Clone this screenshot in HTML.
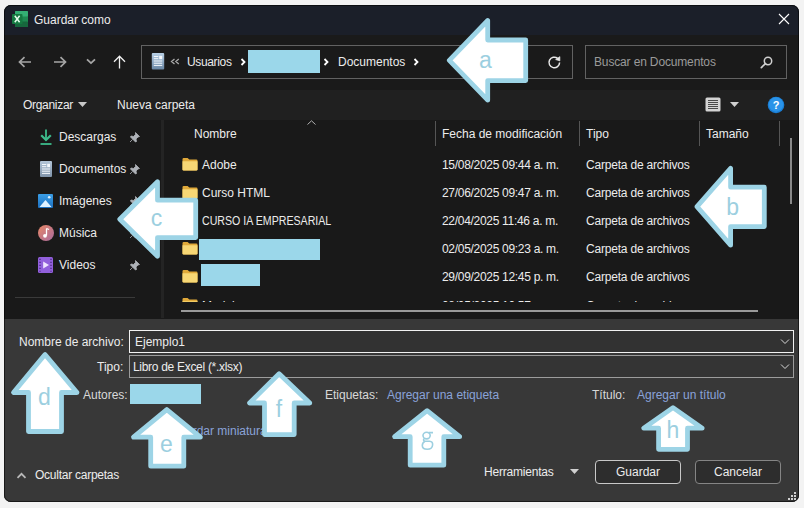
<!DOCTYPE html>
<html><head><meta charset="utf-8">
<style>
*{box-sizing:border-box;margin:0;padding:0}
html,body{width:804px;height:508px;overflow:hidden;background:#f3f3f3;font-family:"Liberation Sans",sans-serif;font-size:12px;color:#fff}
.a{position:absolute}
.t{position:absolute;white-space:nowrap;line-height:14px;height:14px;color:#ececec}
.cp{letter-spacing:-0.2px}
#dlg{position:absolute;left:4px;top:5px;width:795px;height:497px;border-radius:7px;overflow:hidden;background:#191919}
#lay{position:absolute;left:0;top:0;width:804px;height:508px}
.sep{position:absolute;width:1px;background:#3a3a3a}
.box{position:absolute;border:1px solid #7a7a7a;border-radius:2px}
.lnk{color:#8aa3d8}
.dt{letter-spacing:-0.3px}
</style></head><body>
<div id="dlg">
  <div class="a" style="left:0;top:0;width:795px;height:30px;background:#1b1f29"></div>
  <div class="a" style="left:0;top:30px;width:795px;height:55px;background:#1a1a1a"></div>
  <div class="a" style="left:0;top:85px;width:795px;height:30px;background:#202020"></div>
  <div class="a" style="left:0;top:314px;width:795px;height:183px;background:#383838"></div>
</div>
<div class="a" style="left:4px;top:5px;width:795px;height:497px;border-radius:7px;border:1px solid rgba(0,0,0,0.55)"></div>
<div id="lay">
  <!-- title -->
  <svg class="a" style="left:12px;top:10px" width="17" height="18" viewBox="0 0 17 18">
    <rect x="3" y="1" width="13" height="16" rx="1" fill="#1f8a52"/>
    <rect x="3" y="1" width="13" height="5.5" rx="1" fill="#34b074"/>
    <rect x="3" y="11.5" width="13" height="5.5" rx="1" fill="#17673d"/>
    <rect x="0" y="4" width="10.5" height="10" rx="1" fill="#157a41"/>
    <path d="M2.8 5.8L7.6 12.2M7.6 5.8L2.8 12.2" stroke="#e6ffee" stroke-width="1.5"/>
  </svg>
  <div class="t" style="left:34px;top:13px">Guardar como</div>
  <svg class="a" style="left:778px;top:13px" width="12" height="12" viewBox="0 0 12 12"><path d="M1 1L11 11M11 1L1 11" stroke="#fff" stroke-width="1.1"/></svg>

  <!-- nav buttons -->
  <svg class="a" style="left:18px;top:56px" width="14" height="12" viewBox="0 0 14 12"><path d="M13 6H1.8M6.5 1.2L1.5 6l5 4.8" stroke="#a6a6a6" stroke-width="1.7" fill="none"/></svg>
  <svg class="a" style="left:53px;top:56px" width="14" height="12" viewBox="0 0 14 12"><path d="M1 6h11.2M7.5 1.2L12.5 6l-5 4.8" stroke="#a6a6a6" stroke-width="1.7" fill="none"/></svg>
  <svg class="a" style="left:86px;top:58px" width="10" height="7" viewBox="0 0 10 7"><path d="M1 1.3l4 3.8 4-3.8" stroke="#a6a6a6" stroke-width="1.8" fill="none"/></svg>
  <svg class="a" style="left:113px;top:55px" width="13" height="14" viewBox="0 0 13 14"><path d="M6.5 13.5V1.2M1 6.7L6.5 1.2 12 6.7" stroke="#f0f0f0" stroke-width="1.3" fill="none"/></svg>

  <!-- address box -->
  <div class="box" style="left:141px;top:45px;width:432px;height:34px;border-color:#626262;border-radius:0"></div>
  <svg class="a" style="left:151px;top:52px" width="14" height="18" viewBox="0 0 14 18">
    <defs><linearGradient id="dg" x1="0" y1="0" x2="0" y2="1"><stop offset="0" stop-color="#b8d0e6"/><stop offset="1" stop-color="#6a87a5"/></linearGradient></defs>
    <rect x="0.8" y="1" width="12.4" height="16.5" rx="1" fill="url(#dg)"/>
    <path d="M2.8 4.5h4.5M2.8 6.7h4.5M2.8 9h8.4M2.8 11.2h8.4M2.8 13.4h8.4" stroke="#f4f8fc" stroke-width="1"/>
    <rect x="8.2" y="3.8" width="3" height="3.4" fill="#f4f8fc"/>
  </svg>
  <svg class="a" style="left:170px;top:58px" width="10" height="7" viewBox="0 0 10 7"><path d="M4.5 1L1.5 3.5 4.5 6M8.8 1L5.8 3.5 8.8 6" stroke="#a8a8a8" stroke-width="1.3" fill="none"/></svg>
  <div class="t" style="left:187px;top:55px;letter-spacing:-0.35px">Usuarios</div>
  <svg class="a" style="left:240px;top:58px" width="6" height="8" viewBox="0 0 6 8"><path d="M1.5 1l3 3-3 3" stroke="#fff" stroke-width="1.8" fill="none"/></svg>
  <div class="a" style="left:248px;top:50px;width:72px;height:23px;background:#9bd7ea"></div>
  <svg class="a" style="left:323px;top:58px" width="6" height="8" viewBox="0 0 6 8"><path d="M1.5 1l3 3-3 3" stroke="#fff" stroke-width="1.8" fill="none"/></svg>
  <div class="t" style="left:338px;top:55px">Documentos</div>
  <svg class="a" style="left:413px;top:58px" width="6" height="8" viewBox="0 0 6 8"><path d="M1.5 1l3 3-3 3" stroke="#fff" stroke-width="1.8" fill="none"/></svg>
  <svg class="a" style="left:547px;top:55px" width="15" height="15" viewBox="0 0 15 15"><path d="M12.6 7.5A5.3 5.3 0 1 1 10.6 3.3" stroke="#e8e8e8" stroke-width="1.5" fill="none"/><path d="M8.6 4.6L12.9 1.6 12.9 5.9Z" fill="#e8e8e8" stroke="#e8e8e8" stroke-width="0.6" stroke-linejoin="round"/></svg>

  <!-- search box -->
  <div class="box" style="left:585px;top:45px;width:202px;height:34px;border-color:#626262;border-radius:0"></div>
  <div class="t" style="left:594px;top:55px;color:#9a9a9a;letter-spacing:-0.15px">Buscar en Documentos</div>
  <svg class="a" style="left:759px;top:54px" width="14" height="16" viewBox="0 0 14 16"><circle cx="9" cy="7" r="3.7" stroke="#d0d0d0" stroke-width="1.5" fill="none"/><path d="M6.4 9.6L2.3 13.6" stroke="#d0d0d0" stroke-width="1.7" stroke-linecap="round"/></svg>

  <!-- command bar -->
  <div class="t" style="left:23px;top:98px;letter-spacing:-0.3px">Organizar</div>
  <svg class="a" style="left:78px;top:102px" width="9" height="5" viewBox="0 0 9 5"><path d="M0 0h9L4.5 5z" fill="#c8c8c8"/></svg>
  <div class="t" style="left:117px;top:98px">Nueva carpeta</div>
  <svg class="a" style="left:705px;top:97px" width="16" height="15" viewBox="0 0 16 15">
    <rect x="0.5" y="0.5" width="15" height="14" rx="1.5" fill="#d4d4d4"/>
    <path d="M3 3.5h10M3 5.5h10M3 7.5h10M3 9.5h10M3 11.5h10" stroke="#4a4a4a" stroke-width="1"/>
  </svg>
  <svg class="a" style="left:730px;top:102px" width="9" height="5" viewBox="0 0 9 5"><path d="M0 0h9L4.5 5z" fill="#d0d0d0"/></svg>
  <svg class="a" style="left:767px;top:96px" width="18" height="18" viewBox="0 0 18 18"><circle cx="9" cy="9" r="8.3" fill="#1a7fd6"/><circle cx="9" cy="8.5" r="7.2" fill="#2a93e8"/><text x="9" y="13" text-anchor="middle" font-family="Liberation Sans" font-weight="bold" font-size="11" fill="#fff">?</text></svg>

  <!-- nav panel -->
  <div class="a" style="left:161px;top:120px;width:3px;height:198px;background:#242424"></div>
  <!-- Descargas -->
  <svg class="a" style="left:39px;top:128px" width="14" height="18" viewBox="0 0 14 18"><path d="M7 1.5v10" stroke="#3dbb8c" stroke-width="1.8"/><path d="M2.2 7.2L7 12 11.8 7.2" fill="none" stroke="#3dbb8c" stroke-width="2.2"/><path d="M1.5 16h11" stroke="#3dbb8c" stroke-width="1.8"/></svg>
  <div class="t" style="left:59px;top:130px">Descargas</div>
  <!-- Documentos -->
  <svg class="a" style="left:39px;top:160px" width="14" height="18" viewBox="0 0 14 18">
    <defs><linearGradient id="dg2" x1="0" y1="0" x2="0" y2="1"><stop offset="0" stop-color="#b4c6d8"/><stop offset="1" stop-color="#8094aa"/></linearGradient></defs>
    <rect x="1" y="1" width="12" height="16" rx="1" fill="url(#dg2)"/>
    <path d="M3 4.5h4.3M3 6.7h4.3M3 9h8M3 11.2h8M3 13.4h8" stroke="#f4f8fc" stroke-width="1"/>
    <rect x="8.2" y="3.8" width="2.8" height="3.4" fill="#f4f8fc"/>
  </svg>
  <div class="t" style="left:59px;top:162px">Documentos</div>
  <!-- Imagenes -->
  <svg class="a" style="left:38px;top:194px" width="15" height="14" viewBox="0 0 15 14"><defs><linearGradient id="ig" x1="0" y1="0" x2="0" y2="1"><stop offset="0" stop-color="#3a9ee6"/><stop offset="1" stop-color="#1c6fbf"/></linearGradient></defs><rect x="0" y="0" width="15" height="14" rx="1" fill="url(#ig)"/><path d="M1.5 13L7.5 6 13.5 13z" fill="#dff2ff"/><circle cx="11.2" cy="3.3" r="1.3" fill="#dff2ff"/></svg>
  <div class="t" style="left:59px;top:194px">Imágenes</div>
  <!-- Musica -->
  <svg class="a" style="left:38px;top:225px" width="16" height="16" viewBox="0 0 16 16"><defs><linearGradient id="mg" x1="0" y1="0" x2="1" y2="1"><stop offset="0" stop-color="#e88866"/><stop offset="1" stop-color="#a86a9e"/></linearGradient></defs><circle cx="8" cy="8" r="8" fill="url(#mg)"/><path d="M8.5 3.5v7" stroke="#fff" stroke-width="1.3"/><circle cx="7" cy="10.8" r="1.9" fill="#fff"/><path d="M8.5 3.5l2.5 1" stroke="#fff" stroke-width="1.3"/></svg>
  <div class="t" style="left:59px;top:226px">Música</div>
  <!-- Videos -->
  <svg class="a" style="left:38px;top:257px" width="15" height="16" viewBox="0 0 15 16"><rect x="0" y="0" width="15" height="16" rx="1.5" fill="#9260dc"/><path d="M2 1.8v13M13 1.8v13" stroke="#4a2a80" stroke-width="1.3" stroke-dasharray="1.3 1.7"/><path d="M5.2 4.5l5.8 3.5-5.8 3.5z" fill="#efe4ff"/></svg>
  <div class="t" style="left:59px;top:258px">Videos</div>
  <!-- pins -->
  <svg class="a" style="left:129px;top:131px" width="12" height="12" viewBox="0 0 12 12"><path d="M6.5 1.5l4 4-1.5.5-2 2 .5 2.5-1 .5L1.5 6 2 5l2.5.5 2-2z M3.5 8.5L1 11" fill="#aeb2b8" stroke="#aeb2b8" stroke-width="0.8"/></svg>
  <svg class="a" style="left:129px;top:163px" width="12" height="12" viewBox="0 0 12 12"><path d="M6.5 1.5l4 4-1.5.5-2 2 .5 2.5-1 .5L1.5 6 2 5l2.5.5 2-2z M3.5 8.5L1 11" fill="#aeb2b8" stroke="#aeb2b8" stroke-width="0.8"/></svg>
  <svg class="a" style="left:129px;top:195px" width="12" height="12" viewBox="0 0 12 12"><path d="M6.5 1.5l4 4-1.5.5-2 2 .5 2.5-1 .5L1.5 6 2 5l2.5.5 2-2z M3.5 8.5L1 11" fill="#aeb2b8" stroke="#aeb2b8" stroke-width="0.8"/></svg>
  <svg class="a" style="left:129px;top:227px" width="12" height="12" viewBox="0 0 12 12"><path d="M6.5 1.5l4 4-1.5.5-2 2 .5 2.5-1 .5L1.5 6 2 5l2.5.5 2-2z M3.5 8.5L1 11" fill="#aeb2b8" stroke="#aeb2b8" stroke-width="0.8"/></svg>
  <svg class="a" style="left:129px;top:259px" width="12" height="12" viewBox="0 0 12 12"><path d="M6.5 1.5l4 4-1.5.5-2 2 .5 2.5-1 .5L1.5 6 2 5l2.5.5 2-2z M3.5 8.5L1 11" fill="#aeb2b8" stroke="#aeb2b8" stroke-width="0.8"/></svg>
  <div class="a" style="left:15px;top:297px;width:120px;height:1px;background:#3a3a3a"></div>

  <!-- list header -->
  <div class="t" style="left:194px;top:127px">Nombre</div>
  <svg class="a" style="left:307px;top:120px" width="9" height="5" viewBox="0 0 9 5"><path d="M0.5 4.5L4.5 0.8 8.5 4.5" stroke="#b0b0b0" stroke-width="1" fill="none"/></svg>
  <div class="sep" style="left:435px;top:121px;height:25px;background:#555"></div>
  <div class="t" style="left:442px;top:127px">Fecha de modificación</div>
  <div class="sep" style="left:579px;top:121px;height:25px;background:#555"></div>
  <div class="t" style="left:586px;top:127px">Tipo</div>
  <div class="sep" style="left:699px;top:121px;height:25px;background:#555"></div>
  <div class="t" style="left:706px;top:127px">Tamaño</div>
  <div class="sep" style="left:779px;top:121px;height:25px;background:#555"></div>
  <div class="a" style="left:790px;top:138px;width:2px;height:66px;background:#8a8a8a"></div>

  <!-- rows -->
  <svg class="a" style="left:182px;top:157px" width="16" height="14" viewBox="0 0 16 14"><path d="M0.5 2.2Q0.5 1 1.7 1H5.6L7.3 2.6H14.3Q15.5 2.6 15.5 3.8V12.3Q15.5 13.5 14.3 13.5H1.7Q0.5 13.5 0.5 12.3Z" fill="#e0a93a"/><path d="M0.5 4.3H15.5V12.3Q15.5 13.5 14.3 13.5H1.7Q0.5 13.5 0.5 12.3Z" fill="#f7d775"/></svg>
  <div class="t" style="left:202px;top:158px">Adobe</div>
  <div class="t dt" style="left:442px;top:158px">15/08/2025 09:44 a. m.</div>
  <div class="t cp" style="left:586px;top:158px">Carpeta de archivos</div>
  <svg class="a" style="left:182px;top:185px" width="16" height="14" viewBox="0 0 16 14"><path d="M0.5 2.2Q0.5 1 1.7 1H5.6L7.3 2.6H14.3Q15.5 2.6 15.5 3.8V12.3Q15.5 13.5 14.3 13.5H1.7Q0.5 13.5 0.5 12.3Z" fill="#e0a93a"/><path d="M0.5 4.3H15.5V12.3Q15.5 13.5 14.3 13.5H1.7Q0.5 13.5 0.5 12.3Z" fill="#f7d775"/></svg>
  <div class="t" style="left:202px;top:186px">Curso HTML</div>
  <div class="t dt" style="left:442px;top:186px">27/06/2025 09:47 a. m.</div>
  <div class="t cp" style="left:586px;top:186px">Carpeta de archivos</div>
  <svg class="a" style="left:182px;top:213px" width="16" height="14" viewBox="0 0 16 14"><path d="M0.5 2.2Q0.5 1 1.7 1H5.6L7.3 2.6H14.3Q15.5 2.6 15.5 3.8V12.3Q15.5 13.5 14.3 13.5H1.7Q0.5 13.5 0.5 12.3Z" fill="#e0a93a"/><path d="M0.5 4.3H15.5V12.3Q15.5 13.5 14.3 13.5H1.7Q0.5 13.5 0.5 12.3Z" fill="#f7d775"/></svg>
  <div class="t" style="left:202px;top:214px;transform:scaleX(0.885);transform-origin:0 0">CURSO IA EMPRESARIAL</div>
  <div class="t dt" style="left:442px;top:214px">22/04/2025 11:46 a. m.</div>
  <div class="t cp" style="left:586px;top:214px">Carpeta de archivos</div>
  <svg class="a" style="left:182px;top:241px" width="16" height="14" viewBox="0 0 16 14"><path d="M0.5 2.2Q0.5 1 1.7 1H5.6L7.3 2.6H14.3Q15.5 2.6 15.5 3.8V12.3Q15.5 13.5 14.3 13.5H1.7Q0.5 13.5 0.5 12.3Z" fill="#e0a93a"/><path d="M0.5 4.3H15.5V12.3Q15.5 13.5 14.3 13.5H1.7Q0.5 13.5 0.5 12.3Z" fill="#f7d775"/></svg>
  <div class="t dt" style="left:442px;top:242px">02/05/2025 09:23 a. m.</div>
  <div class="t cp" style="left:586px;top:242px">Carpeta de archivos</div>
  <svg class="a" style="left:182px;top:269px" width="16" height="14" viewBox="0 0 16 14"><path d="M0.5 2.2Q0.5 1 1.7 1H5.6L7.3 2.6H14.3Q15.5 2.6 15.5 3.8V12.3Q15.5 13.5 14.3 13.5H1.7Q0.5 13.5 0.5 12.3Z" fill="#e0a93a"/><path d="M0.5 4.3H15.5V12.3Q15.5 13.5 14.3 13.5H1.7Q0.5 13.5 0.5 12.3Z" fill="#f7d775"/></svg>
  <div class="t dt" style="left:442px;top:270px">29/09/2025 12:45 p. m.</div>
  <div class="t cp" style="left:586px;top:270px">Carpeta de archivos</div>
  <!-- partial row 6 clipped -->
  <div class="a" style="left:170px;top:296px;width:609px;height:6px;overflow:hidden">
    <svg class="a" style="left:12px;top:1px" width="16" height="14" viewBox="0 0 16 14"><path d="M0.5 2.2Q0.5 1 1.7 1H5.6L7.3 2.6H14.3Q15.5 2.6 15.5 3.8V12.3Q15.5 13.5 14.3 13.5H1.7Q0.5 13.5 0.5 12.3Z" fill="#e0a93a"/><path d="M0.5 4.3H15.5V12.3Q15.5 13.5 14.3 13.5H1.7Q0.5 13.5 0.5 12.3Z" fill="#f7d775"/></svg>
    <div class="t" style="left:32px;top:3px">Modelos</div>
    <div class="t dt" style="left:272px;top:3px">08/05/2025 10:57 a. m.</div>
    <div class="t cp" style="left:416px;top:3px">Carpeta de archivos</div>
  </div>
  <div class="a" style="left:181px;top:310px;width:577px;height:2px;background:#9a9a9a"></div>
  <!-- blue placeholders -->
  <div class="a" style="left:199px;top:239px;width:121px;height:21px;background:#9bd7ea"></div>
  <div class="a" style="left:201px;top:264px;width:59px;height:22px;background:#9bd7ea"></div>

  <!-- bottom form -->
  <div class="t" style="left:19px;top:335px">Nombre de archivo:</div>
  <div class="box" style="left:129px;top:330px;width:665px;height:23px;border-color:#f2f2f2;border-radius:0;background:#323232"></div>
  <div class="t" style="left:135px;top:335px">Ejemplo1</div>
  <svg class="a" style="left:780px;top:338px" width="10" height="7" viewBox="0 0 10 7"><path d="M1 1.5l4 4 4-4" stroke="#d8d8d8" stroke-width="1" fill="none"/></svg>
  <div class="t" style="left:97px;top:360px">Tipo:</div>
  <div class="box" style="left:129px;top:355px;width:665px;height:23px;border-color:#9c9c9c;border-radius:0;background:#343434"></div>
  <div class="t" style="left:133px;top:360px;letter-spacing:-0.3px">Libro de Excel (*.xlsx)</div>
  <svg class="a" style="left:780px;top:363px" width="10" height="7" viewBox="0 0 10 7"><path d="M1 1.5l4 4 4-4" stroke="#d8d8d8" stroke-width="1" fill="none"/></svg>
  <div class="t" style="left:83px;top:388px;color:#d8d8d8">Autores:</div>
  <div class="a" style="left:130px;top:384px;width:71px;height:20px;background:#9bd7ea"></div>
  <div class="t" style="left:325px;top:388px;color:#d8d8d8">Etiquetas:</div>
  <div class="t lnk" style="left:387px;top:388px">Agregar una etiqueta</div>
  <div class="t" style="left:592px;top:388px;color:#d8d8d8">Título:</div>
  <div class="t lnk" style="left:637px;top:388px">Agregar un título</div>
  <div class="t lnk" style="left:170px;top:424px">Guardar miniatura</div>

  <svg class="a" style="left:16px;top:471px" width="11" height="8" viewBox="0 0 11 8"><path d="M1.5 6.8l4-4 4 4" stroke="#b8b8b8" stroke-width="1.8" fill="none"/></svg>
  <div class="t" style="left:35px;top:468px;letter-spacing:-0.25px">Ocultar carpetas</div>
  <div class="t" style="left:484px;top:465px;letter-spacing:-0.2px">Herramientas</div>
  <svg class="a" style="left:570px;top:469px" width="9" height="5" viewBox="0 0 9 5"><path d="M0 0h9L4.5 5z" fill="#d0d0d0"/></svg>
  <div class="box" style="left:595px;top:460px;width:86px;height:24px;border-color:#c8c8c8;border-radius:4px;background:#2d2d2d"></div>
  <div class="t" style="left:595px;top:465px;width:86px;text-align:center">Guardar</div>
  <div class="box" style="left:695px;top:460px;width:86px;height:24px;border-color:#858585;border-radius:4px;background:#2d2d2d"></div>
  <div class="t" style="left:695px;top:465px;width:86px;text-align:center">Cancelar</div>
  <svg class="a" style="left:788px;top:492px" width="10" height="10" viewBox="0 0 10 10"><g fill="#d0d0d0"><rect x="6" y="0" width="2" height="2"/><rect x="3" y="3" width="2" height="2"/><rect x="6" y="3" width="2" height="2"/><rect x="0" y="6" width="2" height="2"/><rect x="3" y="6" width="2" height="2"/><rect x="6" y="6" width="2" height="2"/></g></svg>

  <!-- annotation arrows -->
  <svg class="a" style="left:0;top:0" width="804" height="508" viewBox="0 0 804 508">
    <g fill="#ffffff" stroke="#9dd4e6" stroke-width="4.8" stroke-linejoin="round">
      <path d="M449.3 60.3L487.7 20.5V40H525.7V80.6H487.7V100.2Z"/>
      <path d="M697 206.7L730.6 168.3V187.2H764.3V226.6H730.6V245.2Z"/>
      <path d="M119.8 219.3L157.5 181.7V200.2H195.7V237.6H157.5V256.3Z"/>
      <path d="M45 354.5L13.5 392.5H28.5V431.5H61.5V392.5H77Z"/>
      <path d="M166.8 409.6L133.5 437.2H150.7V466.2H183.8V437.2H200.4Z"/>
      <path d="M279.1 373.7L249.6 403H264.5V434.6H294.2V403H309.8Z"/>
      <path d="M427.1 410.7L394.6 436.7H410.2V465.2H443.8V436.7H459.7Z"/>
      <path d="M673 407.6L643.7 428.2H658.6V449.3H687.5V428.2H702.2Z"/>
    </g>
    <g fill="#9ccfe0" font-family="Liberation Sans" font-size="23" text-anchor="middle">
      <text x="485.5" y="67.5">a</text>
      <text x="732.7" y="214.5">b</text>
      <text x="156.5" y="225.5">c</text>
      <text x="44.3" y="405.3">d</text>
      <text x="166.5" y="452.4">e</text>
      <text x="279" y="417.4">f</text>
      
      <text x="672.9" y="438.4">h</text>
    </g>
    <g fill="none" stroke="#9ccfe0" stroke-width="1.6"><ellipse cx="426.6" cy="435.6" rx="3.6" ry="3.3"/><path d="M428.8 432.6H433M424 438.6Q422.8 440.8 425 441.2H429.5Q433 441.4 432.6 445Q432.2 449.3 427.3 449.3Q422.3 449.3 422.3 445.6Q422.3 442.6 425 441.3"/></g>
  </svg>

</div>
</body></html>
